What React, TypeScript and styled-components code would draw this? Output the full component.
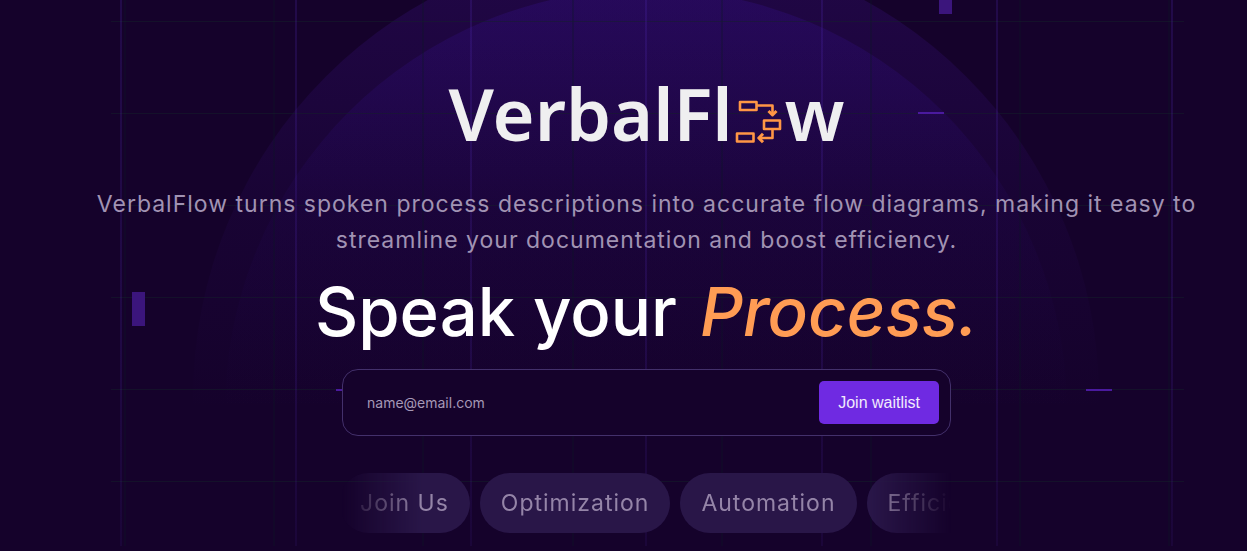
import React from "react";
import styled, { createGlobalStyle, css } from "styled-components";

const GlobalStyle = createGlobalStyle`
  *, *::before, *::after { box-sizing: border-box; }
  body {
    margin: 0;
    background: #15022b;
    color: #fff;
    font-family: Inter, "Liberation Sans", sans-serif;
  }
`;

const Page = styled.main`
  position: relative;
  min-height: 100vh;
  padding: 77px 0 18px 46px;
  overflow: hidden;
`;

const Backdrop = styled.svg`
  position: absolute;
  inset: 0;
  width: 100%;
  height: 100%;
`;

const Hero = styled.section`
  position: relative;
  display: flex;
  flex-direction: column;
  align-items: center;
`;

const Logo = styled.div`
  display: flex;
  align-items: flex-end;
  height: 72px;
  color: #efeff0;
  font: 600 72px/72px "Noto Sans", sans-serif;
`;

const LogoMark = styled.svg`
  width: 48px;
  height: 48px;
  margin: 0 2px 4px;
`;

const Tagline = styled.p`
  max-width: 1120px;
  margin: 37px 0 0;
  color: #a193b3;
  font-size: 23px;
  font-weight: 400;
  line-height: 36px;
  letter-spacing: 1px;
  text-align: center;
`;

const Headline = styled.h1`
  display: flex;
  gap: 23px;
  margin: 12px 0 0;
  font-size: 67px;
  font-weight: 500;
  line-height: 84px;
`;

const Accent = styled.em`
  color: #ff9c54;
`;

const WaitlistForm = styled.form`
  display: flex;
  align-items: center;
  width: 100%;
  max-width: 609px;
  margin-top: 15px;
  padding: 11px;
  border: 1px solid #43306b;
  border-radius: 16px;
  background: #15022b;
`;

const EmailInput = styled.input`
  flex: 1;
  min-width: 0;
  padding: 0 13px;
  border: 0;
  outline: 0;
  background: transparent;
  color: #fff;
  font: 400 14px/20px Inter, sans-serif;

  &::placeholder {
    color: #a598b6;
    opacity: 1;
  }
`;

const JoinButton = styled.button`
  height: 43px;
  padding: 0 19px;
  border: 0;
  border-radius: 5px;
  background: #6f2ae2;
  color: #f1eafc;
  font: 400 16px/20px "Liberation Sans", sans-serif;
  cursor: pointer;
`;

const Ticker = styled.ul`
  display: flex;
  gap: 10px;
  width: 100%;
  max-width: 609px;
  margin: 37px 0 0;
  padding: 0;
  overflow: hidden;
  list-style: none;
  mask-image: linear-gradient(to right, transparent, #000 80px, #000 calc(100% - 80px), transparent);
`;

const Pill = styled.li<{ $first?: boolean }>`
  flex: none;
  padding: 0 21px;
  border-radius: 30px;
  background: #291648;
  color: #9585a8;
  font-size: 23px;
  font-weight: 400;
  line-height: 60px;
  letter-spacing: 1px;
  ${(p) => p.$first && css`margin-left: -3px;`}
`;

const brightLines = [121, 296, 471, 646, 822, 997, 1172];
const dimLines = [124, 273, 422, 572, 721, 870, 1019, 1168];
const rows = [21, 113, 205, 297, 389, 481];
const topics = ["Join Us", "Optimization", "Automation", "Efficiency"];

export default function App() {
  return (
    <>
      <GlobalStyle />
      <Page>
        <Backdrop viewBox="0 0 1247 551" preserveAspectRatio="xMidYMin slice" aria-hidden="true">
          <defs>
            <linearGradient id="outer" gradientUnits="userSpaceOnUse" x1="0" y1="0" x2="0" y2="413">
              <stop offset="0" stopColor="#5a20d0" stopOpacity="0.15" />
              <stop offset="0.5" stopColor="#5a20d0" stopOpacity="0.055" />
              <stop offset="1" stopColor="#5a20d0" stopOpacity="0" />
            </linearGradient>
            <linearGradient id="inner" gradientUnits="userSpaceOnUse" x1="0" y1="0" x2="0" y2="413">
              <stop offset="0" stopColor="#4416c0" stopOpacity="0.18" />
              <stop offset="0.5" stopColor="#4416c0" stopOpacity="0.05" />
              <stop offset="1" stopColor="#4416c0" stopOpacity="0" />
            </linearGradient>
            <linearGradient id="fade" gradientUnits="userSpaceOnUse" x1="0" y1="0" x2="0" y2="551">
              <stop offset="0" stopColor="#5028b4" stopOpacity="0.22" />
              <stop offset="0.6" stopColor="#5028b4" stopOpacity="0.19" />
              <stop offset="1" stopColor="#5028b4" stopOpacity="0.1" />
            </linearGradient>
          </defs>
          <circle cx="646" cy="397" r="453" fill="url(#outer)" />
          <circle cx="646" cy="410" r="421" fill="url(#inner)" />
          {dimLines.map((x) => (
            <rect key={x} x={x} y="0" width="2" height="546" fill="#0c1a24" opacity="0.28" />
          ))}
          {rows.map((y) => (
            <rect key={y} x="111" y={y} width="1073" height="1" fill="#14202a" opacity="0.5" />
          ))}
          {brightLines.map((x) => (
            <rect key={x} x={x - 1} y="0" width="2" height="546" fill="url(#fade)" />
          ))}
          <g fill="#3b157c">
            <rect x="939" y="-20" width="13" height="34" />
            <rect x="132" y="292" width="13" height="34" />
          </g>
          <g fill="#4a1a9e">
            <rect x="918" y="112" width="26" height="2" />
            <rect x="336" y="389" width="26" height="2" />
            <rect x="1086" y="389" width="26" height="2" />
          </g>
        </Backdrop>
        <Hero>
          <Logo role="img" aria-label="VerbalFlow">
            <span>VerbalFl</span>
            <LogoMark viewBox="0 0 48 48" fill="none" stroke="#ff9645" strokeWidth="2.6" strokeLinejoin="round">
              <path d="M5 5h16.500v8H5zM29 23.500h16v8.500H29zM2 36.500h16.500v8H2z" />
              <path d="M22 8.500h15.500v9M37.500 33v8H25" />
              <path strokeWidth="3" d="M33.500 14l4 4 4-4M28 36.800l-4.200 4.200 4.200 4.200" />
            </LogoMark>
            <span>w</span>
          </Logo>
          <Tagline>
            VerbalFlow turns spoken process descriptions into accurate flow diagrams, making it easy to
            streamline your documentation and boost efficiency.
          </Tagline>
          <Headline>
            <span>Speak your</span>
            <Accent>Process.</Accent>
          </Headline>
          <WaitlistForm onSubmit={(e) => e.preventDefault()}>
            <EmailInput type="email" placeholder="name@email.com" aria-label="Email address" />
            <JoinButton type="submit">Join waitlist</JoinButton>
          </WaitlistForm>
          <Ticker>
            {topics.map((topic, i) => (
              <Pill key={topic} $first={i === 0}>{topic}</Pill>
            ))}
          </Ticker>
        </Hero>
      </Page>
    </>
  );
}
